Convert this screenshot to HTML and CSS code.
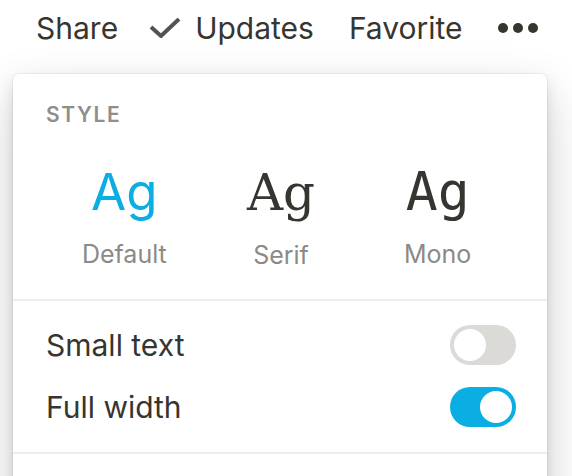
FILE: index.html
```html
<!DOCTYPE html>
<html>
<head>
  <meta charset="UTF-8">
  <title>Page settings</title>
  <link rel="stylesheet" href="styles.css">
</head>
<body>
  <header class="topbar">
    <span class="topbar-item">Share</span>
    <span class="topbar-item updates">
      <svg class="check-icon" width="32" height="20" viewBox="0 0 32 20">
        <polyline points="2,9 12,18 30,1" />
      </svg>
      Updates
    </span>
    <span class="topbar-item">Favorite</span>
    <span class="topbar-item more">
      <svg width="40" height="10" viewBox="0 0 40 10">
        <circle cx="5" cy="5" r="5" />
        <circle cx="20" cy="5" r="5" />
        <circle cx="35" cy="5" r="5" />
      </svg>
    </span>
  </header>

  <div class="menu">
    <section class="menu-section style-section">
      <div class="section-title">Style</div>
      <div class="font-options">
        <div class="font-option selected">
          <div class="font-sample sample-default">Ag</div>
          <div class="font-name">Default</div>
        </div>
        <div class="font-option">
          <div class="font-sample sample-serif">Ag</div>
          <div class="font-name">Serif</div>
        </div>
        <div class="font-option">
          <div class="font-sample sample-mono">Ag</div>
          <div class="font-name">Mono</div>
        </div>
      </div>
    </section>

    <section class="menu-section toggles">
      <div class="toggle-row">
        <span>Small text</span>
        <span class="toggle"><span class="knob"></span></span>
      </div>
      <div class="toggle-row">
        <span>Full width</span>
        <span class="toggle on"><span class="knob"></span></span>
      </div>
    </section>

    <section class="menu-section rest"></section>
  </div>
</body>
</html>
```

FILE: styles.css
```css
body {
  margin: 0;
  height: 476px;
  overflow: hidden;
  font-family: Inter, 'Noto Sans', sans-serif;
  color: #37352f;
  background-color: #fff;
}

.topbar {
  display: flex;
  align-items: center;
  padding: 10px 0 10px 36px;
  font-size: 30px;
  line-height: 36px;
}

.topbar-item {
  display: flex;
  align-items: center;
  margin-right: 35px;
}

.topbar-item:first-child {
  margin-right: 31px;
}

.check-icon {
  margin-right: 14px;
  fill: none;
  stroke: #55534e;
  stroke-width: 4;
}

.more svg {
  display: block;
  fill: #37352f;
}

.menu {
  margin: 18px 0 0 13px;
  width: 534px;
  min-height: 500px;
  background-color: #fff;
  border-radius: 6px;
  box-shadow: 0 0 0 1px rgba(15, 15, 15, 0.05),
              0 6px 12px rgba(15, 15, 15, 0.1),
              0 18px 48px rgba(15, 15, 15, 0.2);
}

.menu-section {
  border-bottom: 2px solid #ededec;
  padding: 0 31px 0 33px;
}

.style-section {
  padding-top: 28px;
  padding-bottom: 29px;
}

.section-title {
  font-size: 21px;
  line-height: 26px;
  font-weight: 600;
  letter-spacing: 1.6px;
  text-transform: uppercase;
  color: #8f8e8a;
}

.font-options {
  display: grid;
  grid-template-columns: repeat(3, 1fr);
  align-items: baseline;
  margin-top: 34px;
}

.font-option {
  display: flex;
  flex-direction: column;
  align-items: center;
}

.font-sample {
  line-height: 60px;
  color: #37352f;
}

.sample-default {
  font-size: 51px;
}

.sample-serif {
  font-family: 'DejaVu Serif', 'Liberation Serif', serif;
  font-size: 50px;
}

.sample-mono {
  font-family: 'DejaVu Sans Mono', 'Liberation Mono', monospace;
  font-size: 53px;
}

.selected .font-sample {
  color: #0aaee3;
}

.font-name {
  margin-top: 17px;
  font-size: 25px;
  line-height: 30px;
  color: #8b8a86;
}

.toggles {
  padding-top: 13px;
  padding-bottom: 14px;
}

.toggle-row {
  display: flex;
  align-items: center;
  justify-content: space-between;
  height: 62px;
  font-size: 30px;
  line-height: 36px;
}

.toggle {
  display: flex;
  align-items: center;
  width: 66px;
  height: 40px;
  padding: 0 4px;
  box-sizing: border-box;
  border-radius: 20px;
  background-color: #dbdad7;
}

.toggle.on {
  justify-content: flex-end;
  background-color: #0aaee3;
}

.knob {
  width: 32px;
  height: 32px;
  border-radius: 50%;
  background-color: #fff;
}

.rest {
  border-bottom: none;
}
```
